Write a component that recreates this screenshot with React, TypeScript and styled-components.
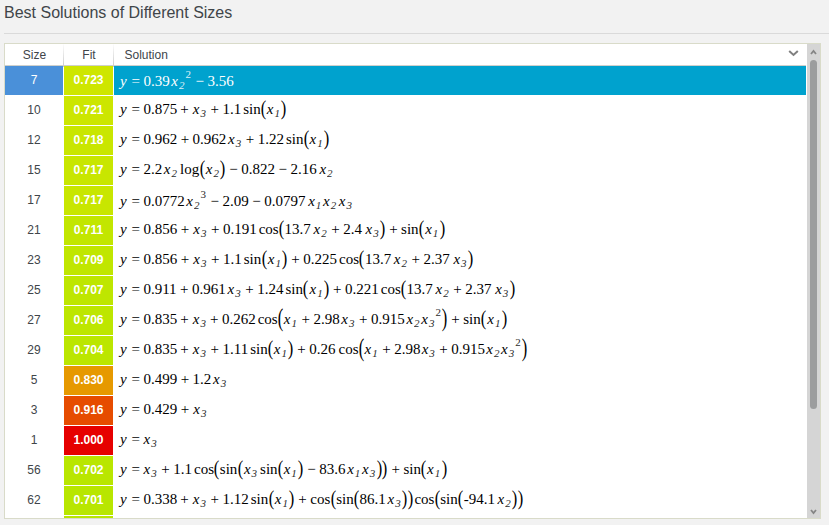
import React from "react";
import styled, { createGlobalStyle } from "styled-components";

const GlobalStyle = createGlobalStyle`
  * { box-sizing: border-box; }
  html, body { margin: 0; height: 525px; overflow: hidden; background: #f2f2f2; }
  body { font-family: "Liberation Sans", Arial, sans-serif; color: #404549; }
`;

const Page = styled.main`
  display: flex;
  flex-direction: column;
  height: 525px;
  padding-left: 4px;
`;

const Title = styled.h1`
  margin: 0;
  height: 34px;
  padding-top: 4px;
  font-size: 16px;
  line-height: 18px;
  font-weight: 400;
  border-bottom: 1px solid #dadada;
`;

const Panel = styled.section`
  display: flex;
  width: 817px;
  height: 476px;
  margin-top: 9px;
  border: 1px solid #d9dbc9;
  background: #fff;
`;

const Grid = styled.div`
  flex: 1;
  min-width: 0;
  height: 474px;
  padding-right: 1px;
  overflow: hidden;
`;

const Header = styled.div`
  display: grid;
  grid-template-columns: 59px 50px 1fr;
  height: 22px;
  border-bottom: 1px solid #cfd0cc;
  font-size: 12px;
  line-height: 23px;
`;

const HeadCell = styled.div<{ $last?: boolean }>`
  display: flex;
  justify-content: ${(p) => (p.$last ? "space-between" : "center")};
  padding-left: ${(p) => (p.$last ? "10.5px" : "1px")};
  border-right: ${(p) => (p.$last ? "0" : "1px solid")};
  border-image: linear-gradient(#fff, #c8c8c8) 1;
`;

const Row = styled.div`
  display: grid;
  grid-template-columns: 58px 1px 49px 1px 1fr;
  height: 30px;
`;

const SizeCell = styled.div<{ $selected?: boolean }>`
  height: 29px;
  font-size: 12px;
  line-height: 28px;
  text-align: center;
  color: ${(p) => (p.$selected ? "#fff" : "inherit")};
  background: ${(p) => (p.$selected ? "#4a90d9" : "#fff")};
`;

const FitCell = styled.div<{ $color: string }>`
  grid-column: 3;
  height: 29px;
  font-size: 12px;
  font-weight: 700;
  line-height: 28px;
  text-align: center;
  color: #fff;
  background: ${(p) => p.$color};
`;

const SolutionCell = styled.div<{ $selected?: boolean; $low?: boolean }>`
  grid-column: 5;
  height: 29px;
  padding: ${(p) => (p.$low ? "1px" : "0")} 0 0 6px;
  font: 15px/${(p) => (p.$low ? "28px" : "26px")} "Liberation Serif", "Times New Roman", serif;
  white-space: nowrap;
  color: ${(p) => (p.$selected ? "#fff" : "#000")};
  background: ${(p) => (p.$selected ? "#00a2ce" : "#fff")};
`;

const Variable = styled.i`
  margin: 0 1px 0 0.7px;
`;

const Script = styled.span<{ $up?: boolean }>`
  position: relative;
  top: ${(p) => (p.$up ? "-8px" : "3px")};
  font-size: 11px;
  font-style: ${(p) => (p.$up ? "normal" : "italic")};
  line-height: 0;
  margin-right: 1px;
  opacity: 0.85;
`;

const Operator = styled.span`
  margin: 0 3.5px;
`;

const Paren = styled.span<{ $tall: boolean }>`
  display: inline-block;
  line-height: 18px;
  margin: 0 0.45px;
  transform: translateY(-1px) scale(1.1, ${(p) => (p.$tall ? 1.7 : 1.42)});
  transform-origin: 50% 57%;
`;

const Nudge = styled.span<{ $by: number }>`
  margin-left: ${(p) => p.$by}px;
`;

const Scrollbar = styled.div`
  display: flex;
  flex-direction: column;
  align-items: center;
  width: 13px;
  height: 474px;
  background: #d5d5d5;
`;

const Thumb = styled.div`
  width: 7px;
  height: 349px;
  border-radius: 4px;
  background: #9c9d9e;
`;

const ArrowBox = styled.div<{ $h: number }>`
  display: flex;
  align-items: center;
  justify-content: center;
  height: ${(p) => p.$h}px;
`;

const HeadChevron = styled.svg`
  margin: 4px 7px 0 0;
`;

const Spacer = styled.div`
  flex: 1;
`;

// Formula notation: _n subscript, ^n superscript, [ ] tall parentheses, ~ adds a 1px gap, ! removes half a pixel.
function Formula({ source }: { source: string }) {
  const tokens = source.match(/_\d|\^\d|[\d.]+|-[\d.]+|sin|cos|log|[xy]|[=+−()[\]~!]/g) ?? [];
  return (
    <>
      {tokens.map((t, i) => {
        if (t[0] === "_") return <Script key={i}>{t[1]}</Script>;
        if (t[0] === "^") return <Script key={i} $up>{t[1]}</Script>;
        if (t === "x") return <Variable key={i}>x</Variable>;
        if (t === "y") return <i key={i}>y&#8202;</i>;
        if (/^[=+−]$/.test(t)) return <Operator key={i}>{t}</Operator>;
        if (/^[()[\]]$/.test(t))
          return (
            <Paren key={i} $tall={t === "[" || t === "]"}>
              {t === "(" || t === "[" ? "(" : ")"}
            </Paren>
          );
        if (t === "~" || t === "!") return <Nudge key={i} $by={t === "~" ? 1 : -0.5} />;
        return <span key={i}>{t}</span>;
      })}
    </>
  );
}

const solutions = [
  { size: 7, fit: "0.723", color: "#cee600", f: "y=0.39~x_2^2−3.56", low: true },
  { size: 10, fit: "0.721", color: "#cce600", f: "y=0.875!+x_3+1.1~~sin(!x_1)" },
  { size: 12, fit: "0.718", color: "#c9e600", f: "y=0.962+0.962~x_3+1.22~~sin(!x_1)" },
  { size: 15, fit: "0.717", color: "#c8e600", f: "y=2.2~x_2~~log(x_2)−0.822−2.16~~x_2" },
  { size: 17, fit: "0.717", color: "#c8e600", f: "y=0.0772~x_2^3−2.09−0.0797~~x_1x_2~x_3", low: true },
  { size: 21, fit: "0.711", color: "#c2e600", f: "y=0.856+x_3+0.191~~cos(13.7~~x_2+2.4~~~x_3)+sin(x_1)" },
  { size: 23, fit: "0.709", color: "#c0e600", f: "y=0.856+x_3+1.1~~sin(x_1)+0.225~~cos(13.7~~x_2+2.37~~~x_3)" },
  { size: 25, fit: "0.707", color: "#bee600", f: "y=0.911+0.961~x_3+1.24~~sin(x_1)+0.221~~cos(13.7~~x_2+2.37~~~x_3)" },
  { size: 27, fit: "0.706", color: "#bde600", f: "y=0.835!+x_3!+0.262~~cos[!x_1+2.98~x_3+0.915~x_2x_3^2]+sin(x_1)" },
  { size: 29, fit: "0.704", color: "#bbe600", f: "y=0.835!+x_3+1.11~~sin(!x_1)+0.26~~~cos[!x_1+2.98!~x_3+0.915~!x_2x_3^2]" },
  { size: 5, fit: "0.830", color: "#e69900", f: "y=0.499+1.2~x_3" },
  { size: 3, fit: "0.916", color: "#e64c00", f: "y=0.429+x_3" },
  { size: 1, fit: "1.000", color: "#e60000", f: "y=!x_3" },
  { size: 56, fit: "0.702", color: "#b9e600", f: "y=!x_3+1.1~~cos(sin(x_3~~sin(!x_1)−83.6~x_1x_3))+sin(!x_1)" },
  { size: 62, fit: "0.701", color: "#b8e600", f: "y=0.338!+x_3+1.12~~sin(x_1)+cos(sin(86.1~x_3))~cos(sin(-94.1~~x_2))" },
];

export default function App() {
  return (
    <Page>
      <GlobalStyle />
      <Title>Best Solutions of Different Sizes</Title>
      <Panel>
        <Grid>
          <Header>
            <HeadCell>Size</HeadCell>
            <HeadCell>Fit</HeadCell>
            <HeadCell $last>
              Solution
              <HeadChevron width="11" height="10" viewBox="0 0 11 10">
                <path d="M1.2 3 L5.5 7 L9.8 3" fill="none" stroke="#808080" strokeWidth="2" />
              </HeadChevron>
            </HeadCell>
          </Header>
          {solutions.map((s, i) => (
            <Row key={s.size}>
              <SizeCell $selected={i === 0}>{s.size}</SizeCell>
              <FitCell $color={s.color}>{s.fit}</FitCell>
              <SolutionCell $selected={i === 0} $low={s.low}>
                <Formula source={s.f} />
              </SolutionCell>
            </Row>
          ))}
          <Row>
            <FitCell $color="#b8e600" />
          </Row>
        </Grid>
        <Scrollbar>
          <ArrowBox $h={16}>
            <svg width="7" height="6" viewBox="0 0 7 6">
              <path d="M1 5 L3.5 2 L6 5" fill="none" stroke="#858585" strokeWidth="1.8" />
            </svg>
          </ArrowBox>
          <Thumb />
          <Spacer />
          <ArrowBox $h={12}>
            <svg width="7" height="6" viewBox="0 0 7 6">
              <path d="M1 1 L3.5 4 L6 1" fill="none" stroke="#858585" strokeWidth="1.8" />
            </svg>
          </ArrowBox>
        </Scrollbar>
      </Panel>
    </Page>
  );
}
